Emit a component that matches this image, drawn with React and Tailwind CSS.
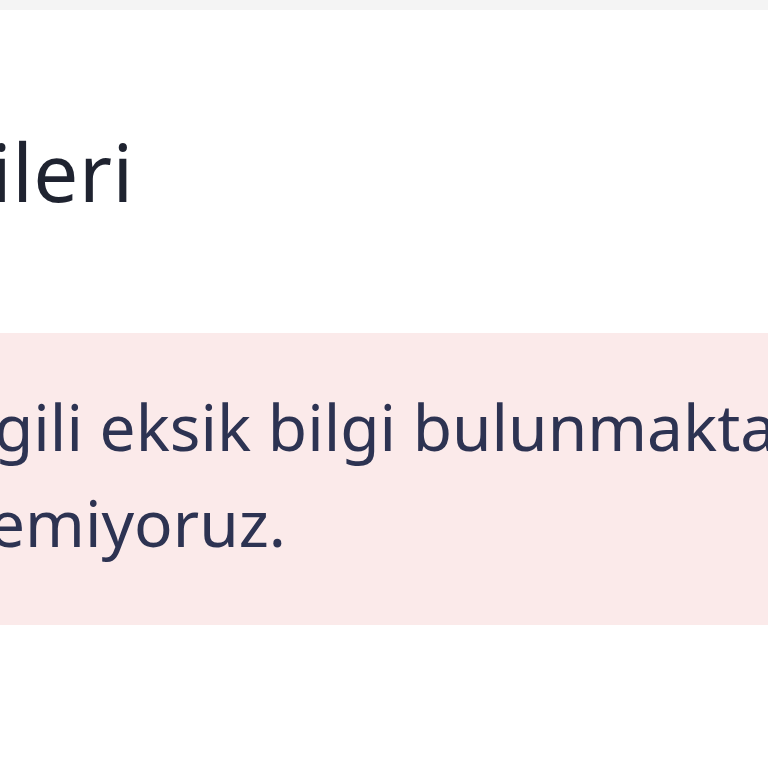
export default function App() {
  return (
    <div className="w-[768px] h-[768px] overflow-hidden bg-white font-['Noto_Sans',sans-serif]">
      <div className="h-[10px] bg-[#f4f4f4]" />

      {/* Page title (cropped) */}
      <h1 className="mt-[113px] mb-[114px] text-[80px] leading-[1.2] font-normal text-[#1f2330] whitespace-nowrap -ml-[9px] tracking-[0.5px]">
        ileri
      </h1>

      {/* Warning alert */}
      <div className="bg-[#fbeaea] pt-[46px] pb-[54px] text-[64px] leading-[1.5] text-[#2d3352] whitespace-nowrap">
        <p className="-ml-[6px]">gili eksik bilgi bulunmaktadır</p>
        <p className="-ml-[11px]">emiyoruz.</p>
      </div>
    </div>
  );
}
